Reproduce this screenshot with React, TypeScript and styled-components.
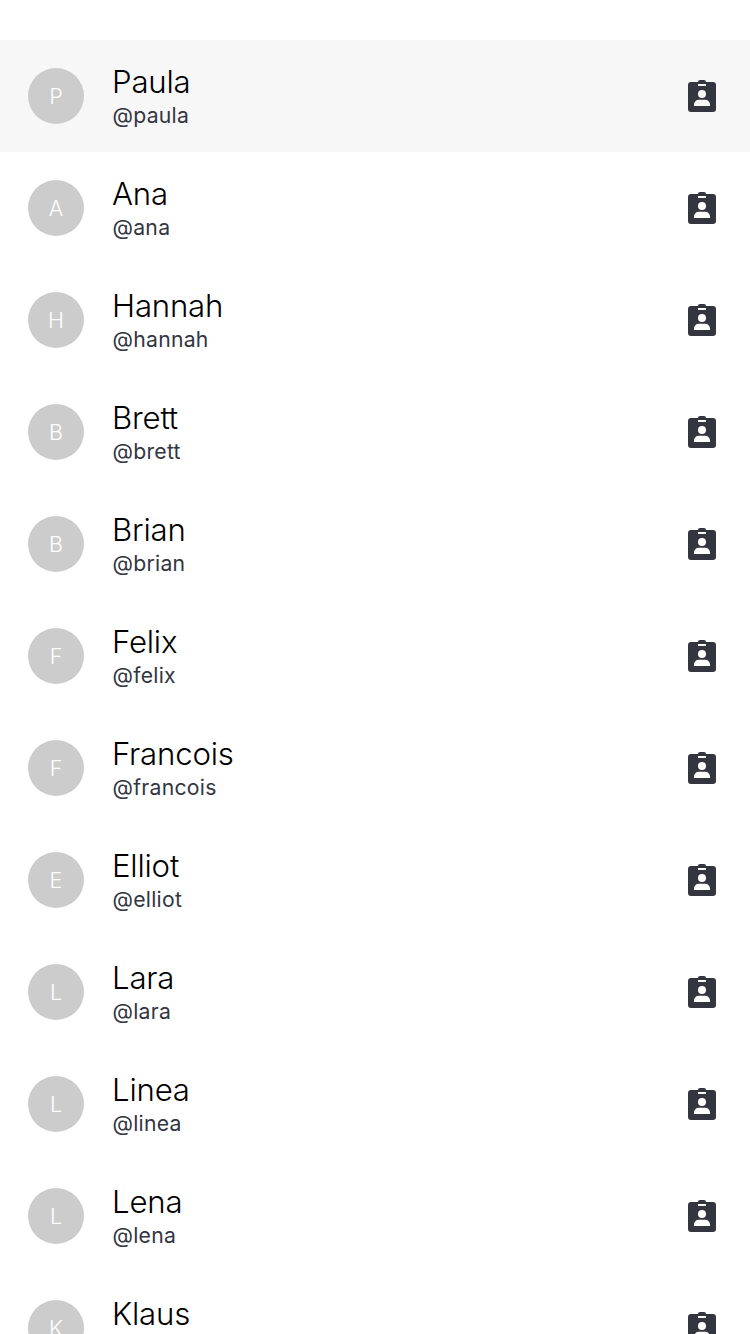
import React from 'react';
import styled, { createGlobalStyle } from 'styled-components';

const GlobalStyle = createGlobalStyle`
  * { box-sizing: border-box; }
  html, body { margin: 0; background: #fff; }
  body { font-family: Inter, "Liberation Sans", sans-serif; overflow: hidden; -webkit-font-smoothing: antialiased; }
`;

const Screen = styled.main`
  height: 1334px;
  padding-top: 40px;
  overflow: hidden;
  background: #fff;
`;

const Row = styled.div<{ $active?: boolean }>`
  display: flex;
  align-items: center;
  height: 112px;
  padding: 0 28px;
  background: ${(p) => (p.$active ? '#f7f7f7' : '#fff')};
`;

const Avatar = styled.div`
  display: flex;
  align-items: center;
  justify-content: center;
  width: 56px;
  height: 56px;
  border-radius: 50%;
  background: #ccc;
  color: #fff;
  font-size: 21.5px;
  font-weight: 300;
  line-height: 26px;
`;

const Info = styled.div`
  flex: 1;
  margin-left: 28px;
`;

const Name = styled.div`
  color: #000;
  font-size: 31.2px;
  font-weight: 300;
  line-height: 38px;
  letter-spacing: -0.2px;
`;

const Handle = styled.div`
  padding-left: 0.5px;
  color: #33363f;
  font-size: 21.2px;
  font-weight: 400;
  line-height: 28px;
  letter-spacing: 0.25px;
`;

const Badge = styled.svg`
  display: block;
  width: 40px;
  height: 40px;
  fill: #33363f;
`;

const people = ['Paula', 'Ana', 'Hannah', 'Brett', 'Brian', 'Felix', 'Francois', 'Elliot', 'Lara', 'Linea', 'Lena', 'Klaus'];

export default function App() {
  return (
    <Screen>
      <GlobalStyle />
      {people.map((name, i) => (
        <Row key={name} $active={i === 0}>
          <Avatar>{name[0]}</Avatar>
          <Info>
            <Name>{name}</Name>
            <Handle>@{name.toLowerCase()}</Handle>
          </Info>
          <Badge viewBox="0 0 40 40">
            <path
              fillRule="evenodd"
              d="M16 6a2 2 0 0 1 2-2h4a2 2 0 0 1 2 2h7a3 3 0 0 1 3 3v24a3 3 0 0 1-3 3H9a3 3 0 0 1-3-3V9a3 3 0 0 1 3-3zM16 8v2h8V8zM20 14a4 4 0 1 0 0 8a4 4 0 1 0 0-8zM12 30h16v-1.5a4.7 4.7 0 0 0-4.7-4.7h-6.6a4.7 4.7 0 0 0-4.7 4.7z"
            />
          </Badge>
        </Row>
      ))}
    </Screen>
  );
}
